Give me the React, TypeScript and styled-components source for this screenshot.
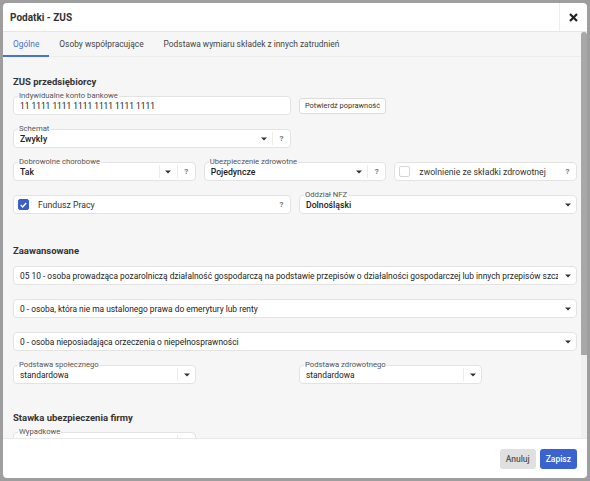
import styled, { createGlobalStyle } from 'styled-components';

const Global = createGlobalStyle`
    html, body {
        margin: 0;
        padding: 0;
        background: #9e9e9e;
    }
    * {
        box-sizing: border-box;
    }
`;

const Backdrop = styled.div`
    width: 590px;
    height: 481px;
    padding: 3px;
    background: #9e9e9e;
    font-family: Roboto, 'Liberation Sans', sans-serif;
`;

const Modal = styled.div`
    width: 584px;
    height: 475px;
    background: #fff;
    border-radius: 4px;
    overflow: hidden;
    display: flex;
    flex-direction: column;
`;

const Header = styled.div`
    height: 29px;
    display: flex;
    align-items: stretch;
    border-bottom: 1px solid #e6e6e6;
`;

const Title = styled.div`
    flex: 1;
    display: flex;
    align-items: center;
    padding-left: 7px;
    font-size: 10px;
    font-weight: 700;
    color: #333;
`;

const Close = styled.div`
    width: 28px;
    display: flex;
    align-items: center;
    justify-content: center;
    border-left: 1px solid #eee;
`;

const Body = styled.div`
    flex: 1;
    display: flex;
    background: #f6f6f6;
    overflow: hidden;
`;

const Scroll = styled.div`
    flex: 1;
    overflow: hidden;
`;

const Track = styled.div`
    width: 6px;
    background: #f0f0f0;
`;

const Thumb = styled.div`
    height: 323px;
    background: #a8a8a8;
    border-radius: 3px 3px 0 0;
`;

const Tabs = styled.div`
    display: flex;
    height: 25px;
    border-bottom: 1px solid #ececec;
`;

const Tab = styled.div<{ $active?: boolean }>`
    padding: 0 10px;
    display: flex;
    align-items: center;
    font-size: 8.4px;
    color: ${(p) => (p.$active ? '#4a72d0' : '#444')};
    border-bottom: 2px solid ${(p) => (p.$active ? '#4a72d0' : 'transparent')};
    margin-bottom: -1px;
`;

const Content = styled.div`
    padding: 19px 4px 0 10px;
`;

const Section = styled.div<{ $top?: number }>`
    display: flex;
    flex-direction: column;
    gap: 14px;
    margin-top: ${(p) => p.$top || 0}px;
`;

const SectionTitle = styled.div<{ $after?: number }>`
    font-size: 9.5px;
    line-height: 12px;
    font-weight: 700;
    color: #333;
    margin-bottom: ${(p) => p.$after ?? -6}px;
`;

const Row = styled.div<{ $cols: number }>`
    display: grid;
    grid-template-columns: repeat(${(p) => p.$cols}, 1fr);
    gap: 8px;
    align-items: center;
`;

const Field = styled.div<{ $w?: string }>`
    position: relative;
    width: ${(p) => p.$w || '100%'};
    height: 19px;
    background: #fff;
    border: 1px solid #e3e3e3;
    border-radius: 4px;
    display: flex;
    align-items: center;
`;

const Label = styled.span`
    position: absolute;
    top: -6px;
    left: 4px;
    padding: 0 1px;
    font-size: 7.7px;
    line-height: 10px;
    color: #555;
    background: linear-gradient(to bottom, transparent 50%, #fff 50%);
    white-space: nowrap;
`;

const Value = styled.div<{ $light?: boolean }>`
    flex: 1;
    min-width: 0;
    padding-left: 6px;
    font-size: ${(p) => (p.$light ? 8.4 : 8.7)}px;
    font-weight: ${(p) => (p.$light ? 400 : 500)};
    color: #222;
    white-space: nowrap;
    overflow: hidden;
`;

const Indicator = styled.div<{ $sep?: boolean }>`
    width: 18px;
    align-self: stretch;
    display: flex;
    align-items: center;
    justify-content: center;
    border-left: 1px solid ${(p) => (p.$sep ? '#ececec' : 'transparent')};
    margin: 2px 0;
`;

const Help = styled.span`
    font-size: 8px;
    font-weight: 700;
    color: #777;
`;

const Box = styled.span<{ $checked?: boolean }>`
    width: 11px;
    height: 11px;
    margin-left: 4px;
    border-radius: 2px;
    display: flex;
    align-items: center;
    justify-content: center;
    background: ${(p) => (p.$checked ? '#3a5fc9' : '#fff')};
    border: 1px solid ${(p) => (p.$checked ? '#3a5fc9' : '#d6d6d6')};
`;

const CheckText = styled.div`
    flex: 1;
    padding-left: 9px;
    font-size: 8.7px;
    color: #333;
    white-space: nowrap;
`;

const ConfirmButton = styled.button`
    height: 16px;
    padding: 0 5px;
    font-family: inherit;
    font-size: 7.4px;
    color: #333;
    background: #fff;
    border: 1px solid #dcdcdc;
    border-radius: 3px;
`;

const Inline = styled.div`
    display: flex;
    align-items: center;
    gap: 8px;
`;

const Footer = styled.div`
    height: 40px;
    display: flex;
    align-items: center;
    justify-content: flex-end;
    gap: 4px;
    padding-right: 10px;
    border-top: 1px solid #e8e8e8;
`;

const Button = styled.button<{ $primary?: boolean }>`
    height: 20px;
    padding: 0 6px;
    font-family: inherit;
    font-size: 8.5px;
    font-weight: 500;
    border: none;
    border-radius: 3px;
    color: ${(p) => (p.$primary ? '#fff' : '#555')};
    background: ${(p) => (p.$primary ? '#3a63cf' : '#e0e0e0')};
`;

function Caret() {
    return (
        <svg width="6" height="4" viewBox="0 0 6 4">
            <path d="M0 0.5h6L3 3.5z" fill="#333" />
        </svg>
    );
}

function Check() {
    return (
        <svg width="7" height="6" viewBox="0 0 7 6">
            <path d="M0.8 3.1l1.8 1.8L6.2 1" stroke="#fff" strokeWidth="1.4" fill="none" />
        </svg>
    );
}

type SelectProps = {
    label?: string;
    value: string;
    help?: boolean;
    sep?: boolean;
    light?: boolean;
    w?: string;
};

function Select({ label, value, help, sep, light, w }: SelectProps) {
    return (
        <Field $w={w}>
            {label && <Label>{label}</Label>}
            <Value $light={light}>{value}</Value>
            <Indicator $sep={sep}>
                <Caret />
            </Indicator>
            {help && (
                <Indicator $sep>
                    <Help>?</Help>
                </Indicator>
            )}
        </Field>
    );
}

function Checkbox({ text, checked }: { text: string; checked?: boolean }) {
    return (
        <Field>
            <Box $checked={checked}>{checked && <Check />}</Box>
            <CheckText>{text}</CheckText>
            <Indicator>
                <Help>?</Help>
            </Indicator>
        </Field>
    );
}

export default function App() {
    return (
        <Backdrop>
            <Global />
            <Modal>
                <Header>
                    <Title>Podatki - ZUS</Title>
                    <Close>
                        <svg width="9" height="9" viewBox="0 0 9 9">
                            <path d="M1 1l7 7M8 1L1 8" stroke="#222" strokeWidth="2.2" />
                        </svg>
                    </Close>
                </Header>
                <Body>
                    <Scroll>
                        <Tabs>
                            <Tab $active>Ogólne</Tab>
                            <Tab>Osoby współpracujące</Tab>
                            <Tab>Podstawa wymiaru składek z innych zatrudnień</Tab>
                        </Tabs>
                        <Content>
                            <Section>
                                <SectionTitle>ZUS przedsiębiorcy</SectionTitle>
                                <Inline>
                                    <Field $w="278px">
                                        <Label>Indywidualne konto bankowe</Label>
                                        <Value $light>11 1111 1111 1111 1111 1111 1111</Value>
                                    </Field>
                                    <ConfirmButton>Potwierdź poprawność</ConfirmButton>
                                </Inline>
                                <Row $cols={2}>
                                    <Select label="Schemat" value="Zwykły" help />
                                </Row>
                                <Row $cols={3}>
                                    <Select label="Dobrowolne chorobowe" value="Tak" help sep />
                                    <Select label="Ubezpieczenie zdrowotne" value="Pojedyncze" help />
                                    <Checkbox text="zwolnienie ze składki zdrowotnej" />
                                </Row>
                                <Row $cols={2}>
                                    <Checkbox text="Fundusz Pracy" checked />
                                    <Select label="Oddział NFZ" value="Dolnośląski" />
                                </Row>
                            </Section>
                            <Section $top={31}>
                                <SectionTitle $after={-5}>Zaawansowane</SectionTitle>
                                <Select
                                    light
                                    value="05 10 - osoba prowadząca pozarolniczą działalność gospodarczą na podstawie przepisów o działalności gospodarczej lub innych przepisów szczególnych"
                                />
                                <Select light value="0 - osoba, która nie ma ustalonego prawa do emerytury lub renty" />
                                <Select light value="0 - osoba nieposiadająca orzeczenia o niepełnosprawności" />
                                <Row $cols={2}>
                                    <Select label="Podstawa społecznego" value="standardowa" light sep w="183px" />
                                    <Select label="Podstawa zdrowotnego" value="standardowa" light sep w="183px" />
                                </Row>
                            </Section>
                            <Section $top={28}>
                                <SectionTitle $after={-6}>Stawka ubezpieczenia firmy</SectionTitle>
                                <Select label="Wypadkowe" value="" sep w="183px" />
                            </Section>
                        </Content>
                    </Scroll>
                    <Track>
                        <Thumb />
                    </Track>
                </Body>
                <Footer>
                    <Button>Anuluj</Button>
                    <Button $primary>Zapisz</Button>
                </Footer>
            </Modal>
        </Backdrop>
    );
}
